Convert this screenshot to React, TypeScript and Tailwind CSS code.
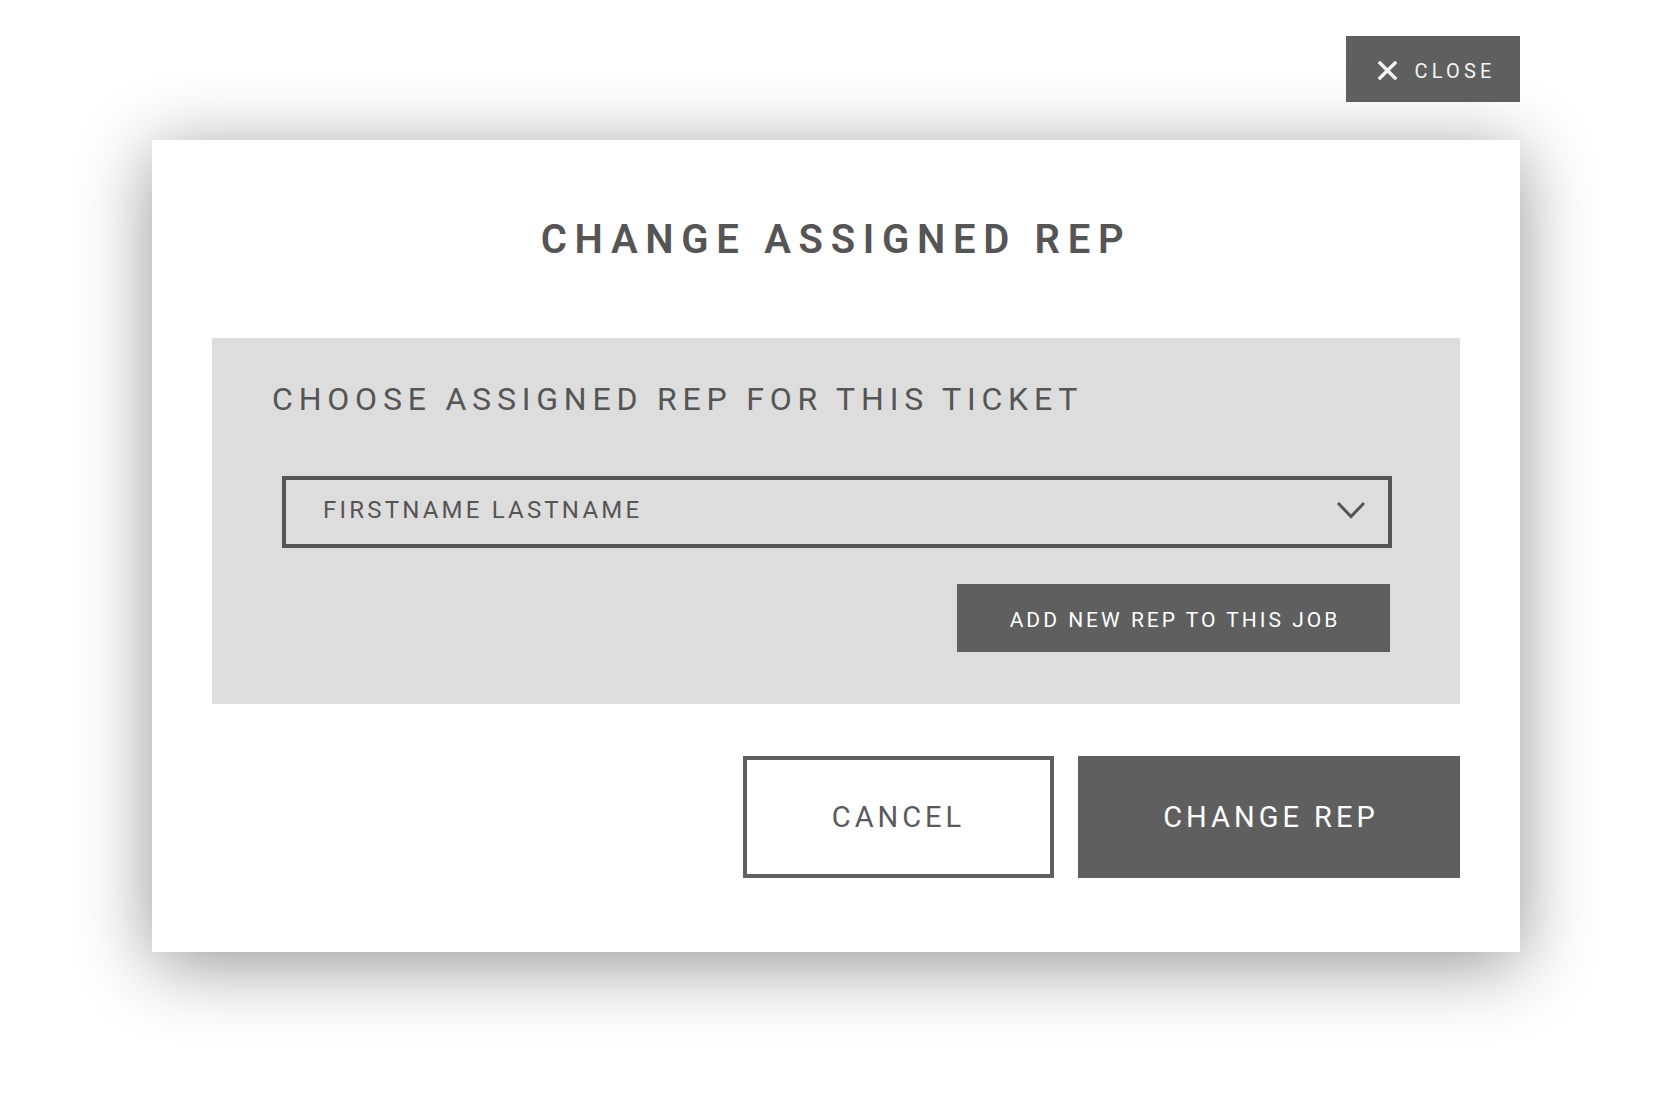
import { useState } from "react"

const font = { fontFamily: "Roboto, 'Noto Sans', sans-serif" }

function CloseIcon() {
  return (
    <svg width="19" height="19" viewBox="0 0 19 19" className="shrink-0">
      <path d="M2 2 L17 17 M17 2 L2 17" stroke="#f4f4f4" strokeWidth="3.4" strokeLinecap="square" />
    </svg>
  )
}

function Chevron() {
  return (
    <svg width="30" height="20" viewBox="0 0 30 20" className="shrink-0">
      <polyline points="2,3 15,16.5 28,3" fill="none" stroke="#555555" strokeWidth="3" />
    </svg>
  )
}

export default function App() {
  const [rep] = useState("FIRSTNAME LASTNAME")

  return (
    <div className="min-h-screen bg-white pt-[36px]" style={font}>
      <div className="ml-[152px] w-[1368px]">
        <div className="flex justify-end">
          <button className="flex h-[66px] w-[174px] items-center justify-center gap-[17px] bg-[#5f5f5f] pt-[3px] pl-[8px]">
            <CloseIcon />
            <span className="text-[20px] leading-none tracking-[4.2px] text-[#f4f4f4]">CLOSE</span>
          </button>
        </div>

        <div className="mt-[38px] bg-white px-[60px] pt-[80px] pb-[74px] shadow-[0_12px_70px_rgba(0,0,0,0.42)]">
          <h1 className="text-center text-[40px] font-semibold leading-none tracking-[7.7px] text-[#555555]">
            CHANGE ASSIGNED REP
          </h1>

          <div className="mt-[78px] bg-[#dddddd] px-[60px] pt-[45px] pb-[52px]">
            <h2 className="text-[32px] leading-none tracking-[5.8px] text-[#555555]">
              CHOOSE ASSIGNED REP FOR THIS TICKET
            </h2>

            <div className="mt-[61px] ml-[10px] mr-[8px] flex h-[72px] items-center justify-between border-4 border-[#555555] pb-[4px] pl-[37px] pr-[22px]">
              <span className="text-[24px] leading-none tracking-[3.2px] text-[#555555]">{rep}</span>
              <Chevron />
            </div>

            <div className="mt-[36px] mr-[10px] flex justify-end">
              <button className="flex h-[68px] w-[433px] items-center justify-center bg-[#5f5f5f] pt-[5px] pl-[3px] text-[21px] leading-none tracking-[3px] text-white">
                ADD NEW REP TO THIS JOB
              </button>
            </div>
          </div>

          <div className="mt-[52px] flex justify-end gap-[24px]">
            <button className="flex h-[122px] w-[311px] items-center justify-center border-4 border-[#5f5f5f] bg-white text-[29px] leading-none tracking-[4px] text-[#5a5a5a]">
              CANCEL
            </button>
            <button className="flex h-[122px] w-[382px] items-center justify-center bg-[#5f5f5f] pl-[4px] text-[29px] leading-none tracking-[4px] text-white">
              CHANGE REP
            </button>
          </div>
        </div>
      </div>
    </div>
  )
}
